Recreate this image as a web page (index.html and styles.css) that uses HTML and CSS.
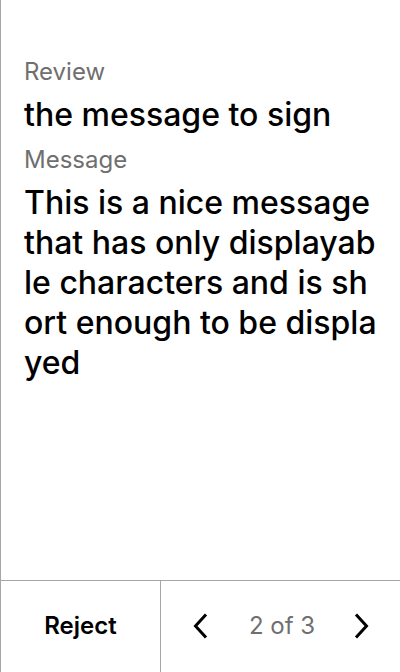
FILE: index.html
```html
<!DOCTYPE html>
<html>
<head>
<meta charset="utf-8">
<link rel="stylesheet" href="styles.css">
</head>
<body>
<div class="screen">
  <main class="content">
    <div class="label">Review</div>
    <div class="title">the message to sign</div>
    <div class="label label-msg">Message</div>
    <div class="value">This is a nice message that has only displayable characters and is short enough to be displayed</div>
  </main>
  <footer class="footer">
    <div class="reject">Reject</div>
    <div class="nav">
      <svg class="chev" width="16" height="26" viewBox="0 0 16 26"><path d="M13 1.5 L2.5 13 L13 24.5" fill="none" stroke="#000" stroke-width="3"/></svg>
      <span class="page">2 of 3</span>
      <svg class="chev" width="16" height="26" viewBox="0 0 16 26"><path d="M3 1.5 L13.5 13 L3 24.5" fill="none" stroke="#000" stroke-width="3"/></svg>
    </div>
  </footer>
</div>
</body>
</html>
```
FILE: styles.css
```css
html, body {
  margin: 0;
  padding: 0;
  background: #fff;
}
body {
  font-family: Inter, "Noto Sans", sans-serif;
  color: #000;
}
.screen {
  width: 400px;
  height: 672px;
  box-sizing: border-box;
  border-left: 1px solid #a6a6a6;
  display: flex;
  flex-direction: column;
}
.content {
  flex: 1;
  padding: 56px 20px 0 23px;
  display: flex;
  flex-direction: column;
}
.label {
  font-size: 24px;
  line-height: 32px;
  color: #6f6f6f;
}
.title {
  margin-top: 7px;
  font-size: 32px;
  line-height: 40px;
  font-weight: 500;
}
.label-msg {
  margin-top: 9px;
}
.value {
  margin-top: 7px;
  font-size: 32px;
  line-height: 40px;
  font-weight: 500;
  word-break: break-all;
}
.footer {
  height: 91px;
  border-top: 1px solid #a6a6a6;
  display: flex;
}
.reject {
  width: 159px;
  border-right: 1px solid #a6a6a6;
  display: flex;
  align-items: center;
  justify-content: center;
  padding-bottom: 2px;
  font-size: 24px;
  font-weight: 600;
}
.nav {
  flex: 1;
  display: flex;
  align-items: center;
  justify-content: space-between;
  padding: 0 31px 2px 32px;
}
.page {
  font-size: 24px;
  color: #6f6f6f;
  margin-left: 2px;
}
.chev {
  display: block;
}
```
